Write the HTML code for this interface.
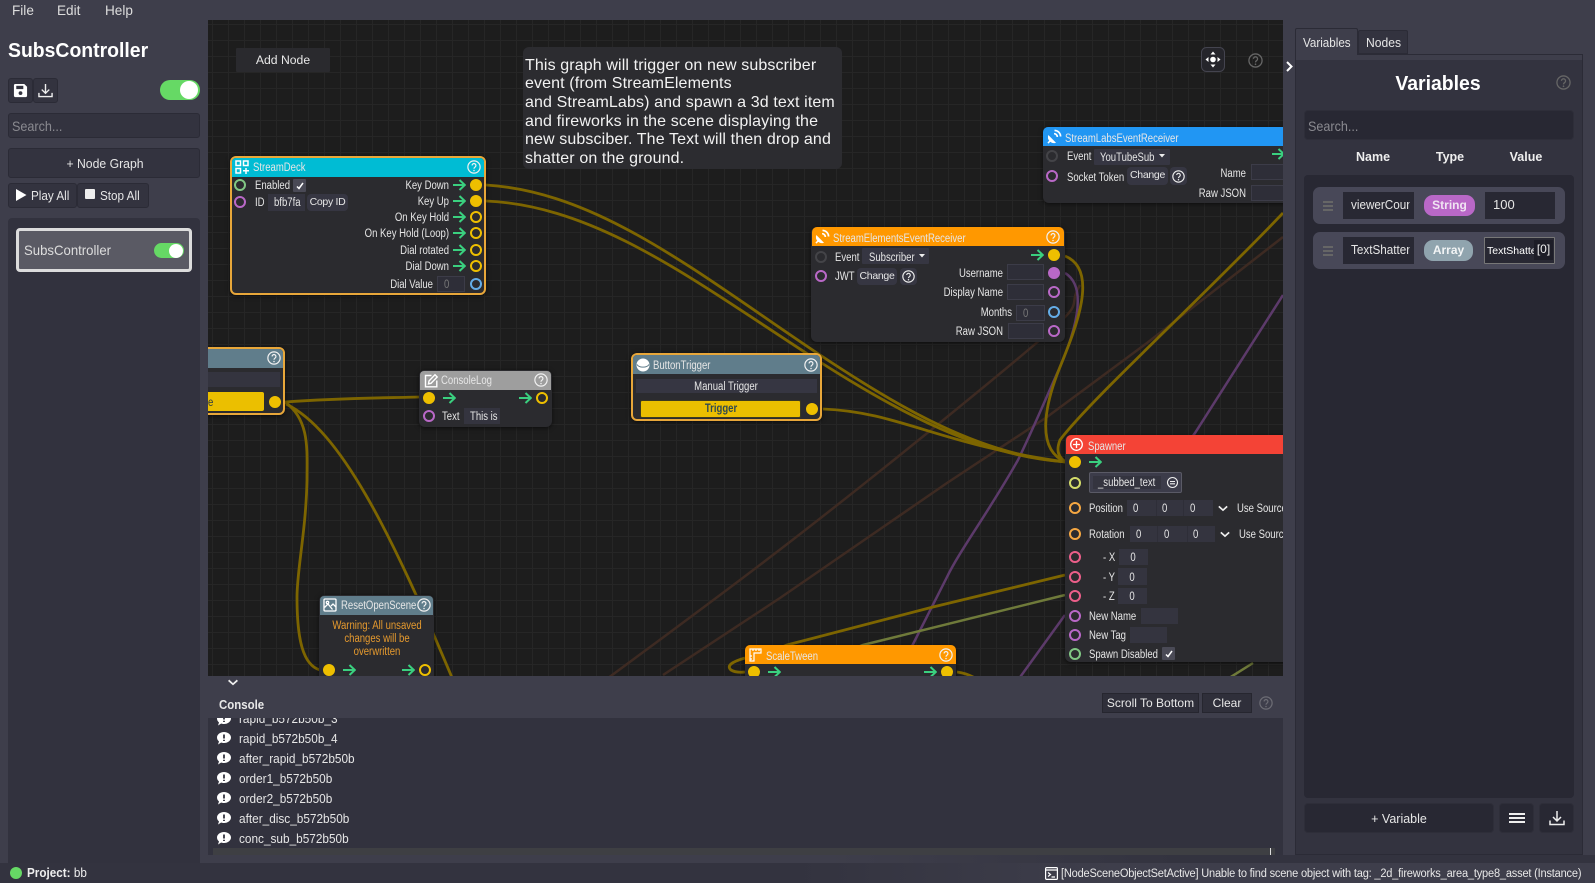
<!DOCTYPE html>
<html><head><meta charset="utf-8"><title>SubsController</title>
<style>
html,body{margin:0;padding:0;background:#3e3e4b;}
body{position:relative;width:1595px;height:883px;overflow:hidden;font-family:"Liberation Sans",sans-serif;color:#e8e8e8;}
div,span,svg{box-sizing:border-box;}
.a{position:absolute;}
.t{position:absolute;white-space:nowrap;line-height:14px;height:14px;font-size:11px;color:#e6e6e6;transform:scaleX(var(--s,1));transform-origin:0 50%;}
.r{transform:translateX(-100%) scaleX(var(--s,1));transform-origin:100% 50%;}
.c{transform:translateX(-50%) scaleX(var(--s,1));transform-origin:50% 50%;}
#cv .t{--s:.83;font-size:11.5px;margin-top:1px;}
.b{position:absolute;box-sizing:border-box;text-align:center;white-space:nowrap;}
.n{position:absolute;background:#2b2b2f;border-radius:6px;box-shadow:0 1px 5px rgba(0,0,0,.6);}
.sel{border:2px solid #e8a73a;}
.h{position:absolute;}
.p{position:absolute;width:12px;height:12px;border-radius:50%;border:2px solid #eebf00;transform:translate(-50%,-50%);}
.f{background:#eebf00;}
.pu{border-color:#b968c7;}.bl{border-color:#64ade8;}.gr{border-color:#81c784;}.dm{border-color:#444448;}
.or{border-color:#f5a742;}.pk{border-color:#ec5f8a;}.li{border-color:#d4dc6a;}
.i{position:absolute;background:#34343f;border:1px solid #3c3c48;}
.btn{position:absolute;background:#363642;border-radius:4px;text-align:center;font-size:10.5px;line-height:17px;color:#e6e6e6;letter-spacing:-.3px;}
svg.s{position:absolute;overflow:visible;}
.ar{color:#3ad07f;width:13px;height:12px;}
.q{color:#f0f0f0;width:14px;height:14px;}
.ctl{position:absolute;background:#33333f;border:1px solid #2b2b36;border-radius:3px;color:#e6e6e6;text-align:center;}
.dk{position:absolute;background:#282833;border:1px solid #2e2e39;border-radius:4px;color:#e6e6e6;text-align:center;}
</style></head><body>
<svg width="0" height="0" style="position:absolute"><defs>
<symbol id="arr" viewBox="0 0 13 12"><path d="M0 6H11.5M6.5 1L11.8 6L6.5 11" fill="none" stroke="currentColor" stroke-width="2"/></symbol>
<symbol id="q" viewBox="0 0 16 16"><circle cx="8" cy="8" r="7" fill="none" stroke="currentColor" stroke-width="1.4"/><path d="M5.8 6.2a2.2 2.2 0 1 1 3.4 1.9c-.8.5-1.2 1-1.2 1.9" fill="none" stroke="currentColor" stroke-width="1.4"/><circle cx="8" cy="12" r=".9" fill="currentColor"/></symbol>
<symbol id="dish" viewBox="0 0 16 16"><path d="M1.4 6.4A6.4 6.4 0 0 0 9.6 14.6Z" fill="#fff"/><path d="M1 15L5 11" stroke="#fff" stroke-width="1.6"/><path d="M7.5 5A3.5 3.5 0 0 1 11 8.5M8 1.5A6.5 6.5 0 0 1 14.5 8" fill="none" stroke="#fff" stroke-width="1.8"/></symbol>
<symbol id="dl" viewBox="0 0 16 16"><path d="M8 1V10.5M4 7L8 11L12 7M1 10.5V14.5H15V10.5" fill="none" stroke="currentColor" stroke-width="1.5"/></symbol>
<symbol id="ch" viewBox="0 0 12 8"><path d="M1 1.5L6 6L11 1.5" fill="none" stroke="currentColor" stroke-width="2"/></symbol>
<symbol id="bub" viewBox="0 0 14 13"><path d="M7 0C10.900 0 14 2.500 14 5.500S10.900 11 7 11C6 11 5 10.800 4.200 10.500L1 12.500L2 9.500C.8 8.500 0 7 0 5.500C0 2.500 3.100 0 7 0Z" fill="#fff"/><path d="M7 2.500V6.500M7 7.800V9" stroke="#32323e" stroke-width="1.800"/></symbol>
</defs></svg>

<!-- menu -->
<div class="t" style="left:12px;top:3px;font-size:14px;--s:.97;color:#ddd">File</div>
<div class="t" style="left:57px;top:3px;font-size:14px;--s:.97;color:#ddd">Edit</div>
<div class="t" style="left:105px;top:3px;font-size:14px;--s:.97;color:#ddd">Help</div>

<!-- left sidebar -->
<div class="t" style="left:8px;top:41px;font-size:20px;line-height:20px;height:20px;font-weight:bold;color:#fff;--s:.97">SubsController</div>
<div class="ctl" style="left:8px;top:78px;width:25px;height:25px;"></div>
<svg class="s" style="left:13px;top:83px;width:15px;height:15px" viewBox="0 0 16 16"><path d="M1 2.5A1.5 1.5 0 0 1 2.5 1H12L15 4V13.500A1.500 1.500 0 0 1 13.500 15H2.500A1.500 1.500 0 0 1 1 13.500Z" fill="#fff"/><rect x="3.500" y="3" width="7.500" height="3.500" fill="#33333f"/><circle cx="8" cy="10.800" r="2" fill="#33333f"/></svg>
<div class="ctl" style="left:33px;top:78px;width:25px;height:25px;"></div>
<svg class="s" style="left:38px;top:83px;width:15px;height:15px;color:#eee"><use href="#dl"/></svg>
<div class="a" style="left:160px;top:80px;width:40px;height:20px;border-radius:10px;background:#66d965"></div>
<div class="a" style="left:180px;top:81px;width:18px;height:18px;border-radius:50%;background:#fff"></div>
<div class="ctl" style="left:8px;top:113px;width:192px;height:25px;"></div>
<div class="t" style="left:12px;top:119px;font-size:14px;--s:.9;color:#8a8a90">Search...</div>
<div class="ctl" style="left:8px;top:148px;width:192px;height:30px;"></div>
<div class="t c" style="left:105px;top:157px;font-size:13px;--s:.94">+ Node Graph</div>
<div class="ctl" style="left:8px;top:183px;width:69px;height:25px;"></div>
<svg class="s" style="left:16px;top:189px;width:11px;height:12px" viewBox="0 0 11 12"><path d="M0 0L10.500 6L0 12Z" fill="#fff"/></svg>
<div class="t" style="left:31px;top:189px;font-size:13px;--s:.9">Play All</div>
<div class="ctl" style="left:77px;top:183px;width:72px;height:25px;"></div>
<div class="a" style="left:85px;top:189px;width:10px;height:10px;background:#eee;border-radius:1px"></div>
<div class="t" style="left:100px;top:189px;font-size:13px;--s:.9">Stop All</div>
<div class="a" style="left:8px;top:218px;width:192px;height:645px;background:#32323e;border-radius:4px 4px 0 0"></div>
<div class="a" style="left:16px;top:228px;width:176px;height:44px;background:#5a5a64;border:3px solid #dcdcdc;border-radius:4px"></div>
<div class="t" style="left:24px;top:243px;font-size:14px;--s:.94;color:#ddd">SubsController</div>
<div class="a" style="left:154px;top:243px;width:30px;height:15px;border-radius:8px;background:#66d965"></div>
<div class="a" style="left:169px;top:243.500px;width:14px;height:14px;border-radius:50%;background:#fff"></div>

<!-- canvas -->
<div id="cv" class="a" style="left:208px;top:20px;width:1075px;height:656px;overflow:hidden;background-color:#1d1d1d;background-image:linear-gradient(#262626 1px,transparent 1px),linear-gradient(90deg,#262626 1px,transparent 1px);background-size:16px 16px;background-position:4px 4px;">
<div class="a" style="left:-208px;top:-20px;width:1595px;height:883px;">

<svg class="s" style="left:0;top:0;width:1595px;height:883px" viewBox="0 0 1595 883" fill="none">
<g stroke="#3d2a22" stroke-width="2.500">
<path d="M600 684C700 610 780 553 947 417S1060 320 1080 285"/>
<path d="M663 675L780 598L947 483L1047 417L1147 343L1283 237"/>
</g>
<g stroke="#5c3a6a" stroke-width="2.500">
<path d="M1065 273C1085 285 1080 320 1060 367C1045 400 1035 425 1018 460C990 510 960 550 947 577L905 660"/>
<path d="M1283 295L1195 433L1120 540"/>
<path d="M1065 615L1018 680"/>
</g>
<g stroke="#6f7a3a" stroke-width="2.500">
<path d="M1065 595L863 645L850 650"/>
<path d="M1253 663L1226 680"/>
</g>
<g stroke="#7d6500" stroke-width="2.800">
<path d="M486 185C600 192 700 275 820 355C900 408 980 455 1066 462"/>
<path d="M486 201C600 206 700 285 820 362C900 413 980 456 1066 462"/>
<path d="M823 409C900 412 940 445 1066 462"/>
<path d="M1065 256C1100 270 1075 330 1060 367S1035 450 1066 462"/>
<path d="M1283 213C1200 300 1090 400 1060 440Q1054 455 1066 462"/>
<path d="M1065 575L933 607L787 645L775 650"/>
<path d="M745 658Q724 664 731 670Q736 673 745 672"/>
<path d="M957 672Q966 673 975 678"/>
<path d="M285 402C340 398 380 398 419 397"/>
<path d="M285 402C310 420 307 450 307 480C306 530 297 570 297 597C297 640 303 665 320 670"/>
<path d="M286 404C340 430 390 530 453 680"/>
</g>
</svg>

<div class="b" style="left:236px;top:48px;width:94px;height:24px;background:#2a2a2e;font-size:12.200px;line-height:25px;color:#e8e8e8;border-radius:1px">Add Node</div>

<div class="a" style="left:523px;top:47px;width:319px;height:122px;background:#2c2c30;border-radius:6px;"></div>
<div class="a" style="left:525px;top:56.500px;font-size:16px;letter-spacing:.12px;line-height:18.700px;color:#f2f2f2;white-space:nowrap">This graph will trigger on new subscriber<br>event (from StreamElements<br>and StreamLabs) and spawn a 3d text item<br>and fireworks in the scene displaying the<br>new subsciber. The Text will then drop and<br>shatter on the ground.</div>

<svg class="s" style="left:1201px;top:47px;width:24px;height:25px" viewBox="0 0 24 25"><rect x=".5" y=".5" width="23" height="24" rx="5" fill="#25252b" stroke="#44444f"/><circle cx="12" cy="12.500" r="2.800" fill="#fff"/><path d="M12 4.500L9.500 7.500H14.500ZM12 20.500L9.500 17.500H14.500ZM4.500 12.500L7.500 10V15ZM19.500 12.500L16.500 10V15Z" fill="#fff"/></svg>
<svg class="s" style="left:1248px;top:53px;width:15px;height:15px;color:#666"><use href="#q"/></svg>

<!-- StreamDeck -->
<div class="n sel" style="left:230px;top:156px;width:256px;height:139px;"></div>
<div class="h" style="left:232px;top:158px;width:252px;height:19px;background:#00bcd4;border-radius:4px 4px 0 0"></div>
<svg class="s" style="left:235px;top:160px;width:14px;height:14px" viewBox="0 0 14 14" fill="none" stroke="#fff" stroke-width="1.500"><rect x="1" y="1" width="4.500" height="4.500"/><rect x="8.500" y="1" width="4.500" height="4.500"/><rect x="1" y="8.500" width="4.500" height="4.500"/><path d="M8 10.800H14M11 8V14"/></svg>
<div class="t" style="left:253px;top:160px">StreamDeck</div>
<svg class="s q" style="left:467px;top:160px"><use href="#q"/></svg>
<div class="p gr" style="left:240px;top:185px"></div>
<div class="t" style="left:255px;top:178px">Enabled</div>
<div class="a" style="left:293px;top:179px;width:13px;height:13px;background:#4a4a56;border-radius:1px"></div>
<svg class="s" style="left:296px;top:182px;width:8px;height:8px" viewBox="0 0 8 8"><path d="M1 4.500L3 6.500L7 1" fill="none" stroke="#fff" stroke-width="1.500"/></svg>
<div class="p pu" style="left:240px;top:202px"></div>
<div class="t" style="left:255px;top:195px">ID</div>
<div class="i" style="left:268px;top:194px;width:37px;height:17px;border:0"></div>
<div class="t" style="left:274px;top:195px;width:36px;overflow:hidden">bfb7fa</div>
<div class="btn" style="left:307px;top:194px;width:41px;height:17px">Copy ID</div>
<div class="t r" style="left:449px;top:178px">Key Down</div>
<div class="t r" style="left:449px;top:194px">Key Up</div>
<div class="t r" style="left:449px;top:210px">On Key Hold</div>
<div class="t r" style="left:449px;top:226px">On Key Hold (Loop)</div>
<div class="t r" style="left:449px;top:243px">Dial rotated</div>
<div class="t r" style="left:449px;top:259px">Dial Down</div>
<div class="t r" style="left:433px;top:277px">Dial Value</div>
<svg class="s ar" style="left:453px;top:179px"><use href="#arr"/></svg>
<svg class="s ar" style="left:453px;top:195px"><use href="#arr"/></svg>
<svg class="s ar" style="left:453px;top:211px"><use href="#arr"/></svg>
<svg class="s ar" style="left:453px;top:227px"><use href="#arr"/></svg>
<svg class="s ar" style="left:453px;top:244px"><use href="#arr"/></svg>
<svg class="s ar" style="left:453px;top:260px"><use href="#arr"/></svg>
<div class="p f" style="left:476px;top:185px"></div>
<div class="p f" style="left:476px;top:201px"></div>
<div class="p" style="left:476px;top:217px"></div>
<div class="p" style="left:476px;top:233px"></div>
<div class="p" style="left:476px;top:250px"></div>
<div class="p" style="left:476px;top:266px"></div>
<div class="p bl" style="left:476px;top:284px"></div>
<div class="i" style="left:437px;top:276px;width:28px;height:16px;background:#2e2e38"></div>
<div class="t" style="left:444px;top:277px;color:#777">0</div>

<!-- cut-off left node -->
<div class="n sel" style="left:150px;top:347px;width:135px;height:68px;"></div>
<div class="h" style="left:152px;top:349px;width:131px;height:19px;background:#607d8b;border-radius:4px 4px 0 0"></div>
<svg class="s q" style="left:267px;top:351px"><use href="#q"/></svg>
<div class="a" style="left:152px;top:372px;width:128px;height:15px;background:#34343f"></div>
<div class="a" style="left:152px;top:392px;width:112px;height:19px;background:#ebbf00;border-radius:2px"></div>
<div class="t" style="left:208px;top:395px;color:#2a3a44">e</div>
<div class="p f" style="left:275px;top:402px"></div>

<!-- ConsoleLog -->
<div class="n" style="left:419px;top:370px;width:133px;height:57px;"></div>
<div class="h" style="left:420px;top:371px;width:131px;height:19px;background:#9e9e9e;border-radius:4px 4px 0 0"></div>
<svg class="s" style="left:424px;top:374px;width:14px;height:14px" viewBox="0 0 14 14" fill="none" stroke="#fff" stroke-width="1.400"><path d="M7.500 1.500H1.500V12.800H12.800V6.500"/><path d="M11 .8L13.200 3L7 9.300L4.500 9.800L5 7Z"/></svg>
<div class="t" style="left:441px;top:373px">ConsoleLog</div>
<svg class="s q" style="left:534px;top:373px"><use href="#q"/></svg>
<div class="p f" style="left:428.500px;top:398px"></div>
<svg class="s ar" style="left:443px;top:392px"><use href="#arr"/></svg>
<svg class="s ar" style="left:519px;top:392px"><use href="#arr"/></svg>
<div class="p" style="left:542px;top:398px"></div>
<div class="p pu" style="left:428.500px;top:416px"></div>
<div class="t" style="left:442px;top:409px">Text</div>
<div class="i" style="left:464px;top:408px;width:36px;height:16px;border:0"></div>
<div class="t" style="left:470px;top:409px;width:35px;overflow:hidden">This is</div>

<!-- ButtonTrigger -->
<div class="n sel" style="left:631px;top:353px;width:191px;height:68px;"></div>
<div class="h" style="left:633px;top:355px;width:187px;height:19px;background:#607d8b;border-radius:4px 4px 0 0"></div>
<svg class="s" style="left:636px;top:358px;width:14px;height:14px" viewBox="0 0 14 14"><circle cx="7" cy="7" r="6.500" fill="#fff"/><path d="M1 6.500C3 10 11 10 13 6.500" fill="none" stroke="#607d8b" stroke-width="1"/></svg>
<div class="t" style="left:653px;top:358px">ButtonTrigger</div>
<svg class="s q" style="left:804px;top:358px"><use href="#q"/></svg>
<div class="a" style="left:636px;top:379px;width:181px;height:14px;background:#363642"></div>
<div class="t c" style="left:726px;top:379px">Manual Trigger</div>
<div class="a" style="left:640px;top:400px;width:161px;height:18px;background:#ebbf00;border-radius:2px;border:1px solid #3d3a20"></div>
<div class="t c" style="left:721px;top:401px;color:#2f4a50;font-weight:bold">Trigger</div>
<div class="p f" style="left:812px;top:409px"></div>

<!-- ResetOpenScene -->
<div class="n" style="left:319px;top:595px;width:115px;height:100px;"></div>
<div class="h" style="left:320px;top:596px;width:113px;height:19px;background:#607d8b;border-radius:4px 4px 0 0"></div>
<svg class="s" style="left:323px;top:598px;width:14px;height:14px" viewBox="0 0 14 14" fill="none" stroke="#fff" stroke-width="1.300"><rect x="1" y="1" width="12" height="12" rx="1"/><circle cx="4.500" cy="4.500" r="1.200"/><path d="M1.500 9.500L5 6L9.500 11.500M8 8L10 6L13 9"/></svg>
<div class="t" style="left:341px;top:598px">ResetOpenScene</div>
<svg class="s q" style="left:417px;top:598px"><use href="#q"/></svg>
<div class="t c" style="left:377px;top:618px;color:#e69a2e">Warning: All unsaved</div>
<div class="t c" style="left:377px;top:631px;color:#e69a2e">changes will be</div>
<div class="t c" style="left:377px;top:644px;color:#e69a2e">overwritten</div>
<div class="p f" style="left:328.500px;top:670px"></div>
<svg class="s ar" style="left:343px;top:664px"><use href="#arr"/></svg>
<svg class="s ar" style="left:402px;top:664px"><use href="#arr"/></svg>
<div class="p" style="left:425px;top:670px"></div>

<!-- StreamLabs -->
<div class="n" style="left:1043px;top:127px;width:300px;height:76px;"></div>
<div class="h" style="left:1043px;top:127px;width:300px;height:19px;background:#2196f3;border-radius:5px 0 0 0"></div>
<svg class="s" style="left:1047px;top:129px;width:15px;height:15px"><use href="#dish"/></svg>
<div class="t" style="left:1065px;top:131px">StreamLabsEventReceiver</div>
<div class="p dm" style="left:1052px;top:156px"></div>
<div class="t" style="left:1067px;top:149px">Event</div>
<div class="i" style="left:1094px;top:149px;width:76px;height:16px;background:#363642;border:0;border-radius:1px"></div>
<div class="t" style="left:1100px;top:150px">YouTubeSub</div>
<svg class="s" style="left:1159px;top:154px;width:6px;height:4px" viewBox="0 0 6 4"><path d="M0 0H6L3 3.500Z" fill="#eee"/></svg>
<div class="p pu" style="left:1052px;top:176px"></div>
<div class="t" style="left:1067px;top:170px">Socket Token</div>
<div class="btn" style="left:1127px;top:167px;width:41px;height:18px">Change</div>
<div class="btn" style="left:1170px;top:167px;width:17px;height:18px"></div>
<svg class="s" style="left:1172px;top:170px;width:13px;height:13px;color:#eee"><use href="#q"/></svg>
<div class="t r" style="left:1246px;top:166px">Name</div>
<div class="i" style="left:1251px;top:164px;width:40px;height:16px;background:#2e2e38"></div>
<div class="t r" style="left:1246px;top:186px">Raw JSON</div>
<div class="i" style="left:1251px;top:185px;width:40px;height:16px;background:#2e2e38"></div>
<svg class="s ar" style="left:1272px;top:148px"><use href="#arr"/></svg>

<!-- StreamElements -->
<div class="n" style="left:811px;top:227px;width:254px;height:115px;"></div>
<div class="h" style="left:812px;top:227px;width:252px;height:19px;background:#ff9800;border-radius:5px 5px 0 0"></div>
<svg class="s" style="left:815px;top:229px;width:15px;height:15px"><use href="#dish"/></svg>
<div class="t" style="left:833px;top:231px">StreamElementsEventReceiver</div>
<svg class="s q" style="left:1046px;top:230px"><use href="#q"/></svg>
<div class="p dm" style="left:821px;top:257px"></div>
<div class="t" style="left:835px;top:250px">Event</div>
<div class="i" style="left:862px;top:248px;width:67px;height:16px;background:#363642;border:0;border-radius:1px"></div>
<div class="t" style="left:869px;top:250px">Subscriber</div>
<svg class="s" style="left:919px;top:254px;width:6px;height:4px" viewBox="0 0 6 4"><path d="M0 0H6L3 3.500Z" fill="#eee"/></svg>
<svg class="s ar" style="left:1031px;top:249px"><use href="#arr"/></svg>
<div class="p f" style="left:1054px;top:255px"></div>
<div class="p pu" style="left:821px;top:276px"></div>
<div class="t" style="left:835px;top:269px">JWT</div>
<div class="btn" style="left:857px;top:268px;width:40px;height:17px">Change</div>
<div class="btn" style="left:900px;top:268px;width:17px;height:17px"></div>
<svg class="s" style="left:902px;top:270px;width:13px;height:13px;color:#eee"><use href="#q"/></svg>
<div class="t r" style="left:1003px;top:266px">Username</div>
<div class="i" style="left:1007px;top:264px;width:37px;height:16px;background:#2e2e38"></div>
<div class="p f pu" style="left:1054px;top:273px;background:#b968c7"></div>
<div class="t r" style="left:1003px;top:285px">Display Name</div>
<div class="i" style="left:1007px;top:284px;width:37px;height:16px;background:#2e2e38"></div>
<div class="p pu" style="left:1054px;top:292px"></div>
<div class="t r" style="left:1012px;top:305px">Months</div>
<div class="i" style="left:1016px;top:305px;width:29px;height:16px;background:#2e2e38"></div>
<div class="t" style="left:1023px;top:306px;color:#777">0</div>
<div class="p bl" style="left:1054px;top:312px"></div>
<div class="t r" style="left:1003px;top:324px">Raw JSON</div>
<div class="i" style="left:1008px;top:323px;width:36px;height:16px;background:#2e2e38"></div>
<div class="p pu" style="left:1054px;top:331px"></div>

<!-- Spawner -->
<div class="n" style="left:1065px;top:435px;width:280px;height:227px;"></div>
<div class="h" style="left:1066px;top:435px;width:280px;height:19px;background:#f44336;border-radius:5px 0 0 0"></div>
<svg class="s" style="left:1070px;top:438px;width:13px;height:13px" viewBox="0 0 13 13" fill="none" stroke="#fff" stroke-width="1.300"><circle cx="6.500" cy="6.500" r="5.800"/><path d="M6.500 3V10M3 6.500H10"/></svg>
<div class="t" style="left:1088px;top:439px">Spawner</div>
<div class="p f" style="left:1075px;top:462px"></div>
<svg class="s ar" style="left:1089px;top:456px"><use href="#arr"/></svg>
<div class="p li" style="left:1075px;top:483px"></div>
<div class="a" style="left:1089px;top:472px;width:93px;height:21px;background:#3c3c4a;border:1px solid #5a5a66;border-radius:2px"></div>
<div class="a" style="left:1093px;top:476px;width:68px;height:13px;background:#34343f"></div>
<div class="t" style="left:1098px;top:475px">_subbed_text</div>
<svg class="s" style="left:1167px;top:477px;width:11px;height:11px" viewBox="0 0 11 11" fill="none" stroke="#eee" stroke-width="1.100"><circle cx="5.500" cy="5.500" r="5"/><path d="M3 4.500H8M3 6.800H8"/></svg>
<div class="p or" style="left:1075px;top:508px"></div>
<div class="t" style="left:1089px;top:501px">Position</div>
<div class="i" style="left:1127px;top:500px;width:86px;height:16px;border:0"></div>
<div class="a" style="left:1156px;top:500px;width:1px;height:16px;background:#2e2e38"></div>
<div class="a" style="left:1183px;top:500px;width:1px;height:16px;background:#2e2e38"></div>
<div class="t" style="left:1133px;top:501px">0</div><div class="t" style="left:1162px;top:501px">0</div><div class="t" style="left:1190px;top:501px">0</div>
<svg class="s" style="left:1218px;top:505px;width:10px;height:7px;color:#eee"><use href="#ch"/></svg>
<div class="t" style="left:1237px;top:501px">Use Source</div>
<div class="p or" style="left:1075px;top:534px"></div>
<div class="t" style="left:1089px;top:527px">Rotation</div>
<div class="i" style="left:1130px;top:526px;width:85px;height:16px;border:0"></div>
<div class="a" style="left:1157px;top:526px;width:1px;height:16px;background:#2e2e38"></div>
<div class="a" style="left:1187px;top:526px;width:1px;height:16px;background:#2e2e38"></div>
<div class="t" style="left:1136px;top:527px">0</div><div class="t" style="left:1164px;top:527px">0</div><div class="t" style="left:1193px;top:527px">0</div>
<svg class="s" style="left:1220px;top:531px;width:10px;height:7px;color:#eee"><use href="#ch"/></svg>
<div class="t" style="left:1239px;top:527px">Use Source</div>
<div class="p pk" style="left:1075px;top:557px"></div>
<div class="t" style="left:1103px;top:550px">- X</div>
<div class="i" style="left:1119px;top:549px;width:29px;height:16px;border:0"></div>
<div class="t c" style="left:1133px;top:550px">0</div>
<div class="p pk" style="left:1075px;top:577px"></div>
<div class="t" style="left:1103px;top:570px">- Y</div>
<div class="i" style="left:1118px;top:568px;width:29px;height:17px;border:0"></div>
<div class="t c" style="left:1132px;top:570px">0</div>
<div class="p pk" style="left:1075px;top:596px"></div>
<div class="t" style="left:1103px;top:589px">- Z</div>
<div class="i" style="left:1118px;top:588px;width:29px;height:16px;border:0"></div>
<div class="t c" style="left:1132px;top:589px">0</div>
<div class="p pu" style="left:1075px;top:616px"></div>
<div class="t" style="left:1089px;top:609px">New Name</div>
<div class="i" style="left:1141px;top:608px;width:37px;height:16px;border:0"></div>
<div class="p pu" style="left:1075px;top:635px"></div>
<div class="t" style="left:1089px;top:628px">New Tag</div>
<div class="i" style="left:1130px;top:627px;width:37px;height:16px;border:0"></div>
<div class="p gr" style="left:1075px;top:654px"></div>
<div class="t" style="left:1089px;top:647px">Spawn Disabled</div>
<div class="a" style="left:1162px;top:647px;width:13px;height:13px;background:#4a4a56;border-radius:1px"></div>
<svg class="s" style="left:1165px;top:650px;width:8px;height:8px" viewBox="0 0 8 8"><path d="M1 4.500L3 6.500L7 1" fill="none" stroke="#fff" stroke-width="1.500"/></svg>

<!-- ScaleTween -->
<div class="n" style="left:745px;top:645px;width:211px;height:50px;"></div>
<div class="h" style="left:745px;top:645px;width:211px;height:19px;background:#ff9800;border-radius:5px 5px 0 0"></div>
<svg class="s" style="left:749px;top:648px;width:13px;height:14px" viewBox="0 0 13 14" fill="none" stroke="#fff" stroke-width="1.200"><path d="M1 1H12V5H5V13H1Z"/><path d="M4 1V3M7 1V3M10 1V3M1 8H3M1 11H3"/></svg>
<div class="t" style="left:766px;top:649px">ScaleTween</div>
<svg class="s q" style="left:939px;top:648px"><use href="#q"/></svg>
<div class="p f" style="left:754px;top:672px"></div>
<svg class="s ar" style="left:768px;top:666px"><use href="#arr"/></svg>
<svg class="s ar" style="left:924px;top:666px"><use href="#arr"/></svg>
<div class="p f" style="left:947px;top:672px"></div>

</div>
</div>

<!-- collapse chevron right -->
<svg class="s" style="left:1286px;top:61px;width:7px;height:11px" viewBox="0 0 7 11"><path d="M1 1L5.500 5.500L1 10" fill="none" stroke="#fff" stroke-width="2"/></svg>

<!-- Console -->
<svg class="s" style="left:227px;top:679px;width:12px;height:7px;color:#eee"><use href="#ch"/></svg>
<div class="t" style="left:219px;top:698px;font-size:13px;font-weight:bold;--s:.88;color:#e8e8e8">Console</div>
<div class="b" style="left:1102px;top:693px;width:97px;height:20px;background:#2f2f3a;border:1px solid #26262f;font-size:12px;line-height:18px;color:#e8e8e8">Scroll To Bottom</div>
<div class="b" style="left:1202px;top:693px;width:50px;height:20px;background:#2f2f3a;border:1px solid #26262f;font-size:12px;line-height:18px;color:#e8e8e8">Clear</div>
<svg class="s" style="left:1259px;top:696px;width:14px;height:14px;color:#6c6c74"><use href="#q"/></svg>

<div class="a" style="left:208px;top:718px;width:1075px;height:137px;background:#32323e;overflow:hidden">
<div class="a" style="left:5px;top:130px;width:1062px;height:7px;background:#3e3f43"></div>
<div class="a" style="left:1062px;top:130px;width:1px;height:7px;background:#ddd"></div>
<svg class="s" style="left:9px;top:-5px;width:14px;height:13px;color:#fff"><use href="#bub"/></svg>
<div class="t" style="left:31px;top:-6px;font-size:12.500px;--s:.945">rapid_b572b50b_3</div>
<svg class="s" style="left:9px;top:14px;width:14px;height:13px"><use href="#bub"/></svg>
<div class="t" style="left:31px;top:14px;font-size:12.500px;--s:.945">rapid_b572b50b_4</div>
<svg class="s" style="left:9px;top:34px;width:14px;height:13px"><use href="#bub"/></svg>
<div class="t" style="left:31px;top:34px;font-size:12.500px;--s:.945">after_rapid_b572b50b</div>
<svg class="s" style="left:9px;top:54px;width:14px;height:13px"><use href="#bub"/></svg>
<div class="t" style="left:31px;top:54px;font-size:12.500px;--s:.945">order1_b572b50b</div>
<svg class="s" style="left:9px;top:74px;width:14px;height:13px"><use href="#bub"/></svg>
<div class="t" style="left:31px;top:74px;font-size:12.500px;--s:.945">order2_b572b50b</div>
<svg class="s" style="left:9px;top:94px;width:14px;height:13px"><use href="#bub"/></svg>
<div class="t" style="left:31px;top:94px;font-size:12.500px;--s:.945">after_disc_b572b50b</div>
<svg class="s" style="left:9px;top:114px;width:14px;height:13px"><use href="#bub"/></svg>
<div class="t" style="left:31px;top:114px;font-size:12.500px;--s:.945">conc_sub_b572b50b</div>
</div>

<!-- band & footer -->
<div class="a" style="left:200px;top:855px;width:1395px;height:8px;background:linear-gradient(90deg,#3e3e4b 0,#3e3e4b 45%,#33333f 70%,#33333f 100%)"></div>
<div class="a" style="left:0;top:863px;width:1595px;height:20px;background:linear-gradient(90deg,#33333f 0,#33333f 50%,#3e3e4b 70%,#3e3e4b 100%)"></div>
<div class="a" style="left:10px;top:867px;width:12px;height:12px;border-radius:50%;background:#66d965"></div>
<div class="t" style="left:27px;top:866px;font-size:13px;--s:.9;color:#eee"><b>Project:</b> bb</div>
<svg class="s" style="left:1045px;top:867px;width:13px;height:13px" viewBox="0 0 13 13" fill="none" stroke="#fff" stroke-width="1.200"><rect x=".6" y=".6" width="11.800" height="11.800" rx="1"/><path d="M.6 3H12.400M3 5.500L5.500 7.500L3 9.500M6.500 10H10"/></svg>
<div class="t" style="left:1061px;top:867px;font-size:11.500px;letter-spacing:-.2px;--s:.96;color:#e8e8e8">[NodeSceneObjectSetActive] Unable to find scene object with tag: _2d_fireworks_area_type8_asset (Instance)</div>

<!-- right panel -->
<div class="a" style="left:1295px;top:54px;width:288px;height:801px;background:#33333f;border:1px solid #2b2b36;"></div>
<div class="a" style="left:1296px;top:55px;width:286px;height:5px;background:#3e3e4b"></div>
<div class="a" style="left:1295px;top:28px;width:63px;height:27px;background:#3e3e4b;border:1px solid #2b2b36;border-bottom:0;border-radius:2px 2px 0 0"></div>
<div class="t" style="left:1303px;top:36px;font-size:12.500px;--s:.93">Variables</div>
<div class="a" style="left:1358px;top:30px;width:50px;height:24px;background:#33333f;border:1px solid #2b2b36;border-radius:2px 2px 0 0"></div>
<div class="t" style="left:1366px;top:36px;font-size:12.500px;--s:.97">Nodes</div>
<div class="t c" style="left:1438px;top:74px;font-size:20px;line-height:20px;height:20px;font-weight:bold;color:#fff;--s:.97">Variables</div>
<svg class="s" style="left:1556px;top:75px;width:15px;height:15px;color:#666"><use href="#q"/></svg>
<div class="dk" style="left:1304px;top:110px;width:270px;height:30px"></div>
<div class="t" style="left:1308px;top:119px;font-size:14px;--s:.9;color:#8a8a90">Search...</div>
<div class="t c" style="left:1373px;top:150px;font-size:12.500px;font-weight:bold;color:#eee">Name</div>
<div class="t c" style="left:1450px;top:150px;font-size:12.500px;font-weight:bold;color:#eee">Type</div>
<div class="t c" style="left:1526px;top:150px;font-size:12.500px;font-weight:bold;color:#eee">Value</div>
<div class="a" style="left:1304px;top:175px;width:270px;height:623px;background:#282833;border-radius:4px"></div>

<div class="a" style="left:1313px;top:187px;width:252px;height:37px;background:#484858;border-radius:7px"></div>
<div class="a" style="left:1323px;top:201px;width:10px;height:2px;background:#666;box-shadow:0 4px 0 #666,0 8px 0 #666"></div>
<div class="a" style="left:1343px;top:192px;width:71px;height:27px;background:#282833"></div>
<div class="t" style="left:1351px;top:198px;width:65px;overflow:hidden;font-size:13px;--s:.9">viewerCount</div>
<div class="b" style="left:1424px;top:195px;width:51px;height:21px;border-radius:9px;background:#b968c7;color:#f0e4f2;font-weight:bold;font-size:12px;line-height:21px">String</div>
<div class="a" style="left:1485px;top:192px;width:70px;height:27px;background:#282833"></div>
<div class="t" style="left:1493px;top:198px;font-size:13px">100</div>

<div class="a" style="left:1313px;top:232px;width:252px;height:37px;background:#484858;border-radius:7px"></div>
<div class="a" style="left:1323px;top:246px;width:10px;height:2px;background:#666;box-shadow:0 4px 0 #666,0 8px 0 #666"></div>
<div class="a" style="left:1343px;top:237px;width:71px;height:27px;background:#282833"></div>
<div class="t" style="left:1351px;top:243px;width:65px;overflow:hidden;font-size:13px;--s:.9">TextShatter</div>
<div class="b" style="left:1424px;top:240px;width:49px;height:21px;border-radius:9px;background:#90a4ae;color:#f2f4f5;font-weight:bold;font-size:12px;line-height:21px">Array</div>
<div class="a" style="left:1484px;top:237px;width:71px;height:27px;background:#282833;border:1px solid #777;border-radius:1px"></div>
<div class="t" style="left:1487px;top:244px;width:47px;overflow:hidden;font-size:10.500px;color:#fff">TextShatter</div>
<div class="b" style="left:1534px;top:240px;width:19px;height:20px;background:#1d1d27;font-size:12px;line-height:19px;color:#eee">[0]</div>

<div class="dk" style="left:1304px;top:803px;width:190px;height:30px;font-size:12.500px;line-height:30px">+ Variable</div>
<div class="dk" style="left:1499px;top:803px;width:35px;height:30px"></div>
<div class="a" style="left:1509px;top:813px;width:16px;height:2px;background:#eee;box-shadow:0 4px 0 #eee,0 8px 0 #eee"></div>
<div class="dk" style="left:1539px;top:803px;width:35px;height:30px"></div>
<svg class="s" style="left:1549px;top:810px;width:16px;height:16px;color:#eee"><use href="#dl"/></svg>
</body></html>
